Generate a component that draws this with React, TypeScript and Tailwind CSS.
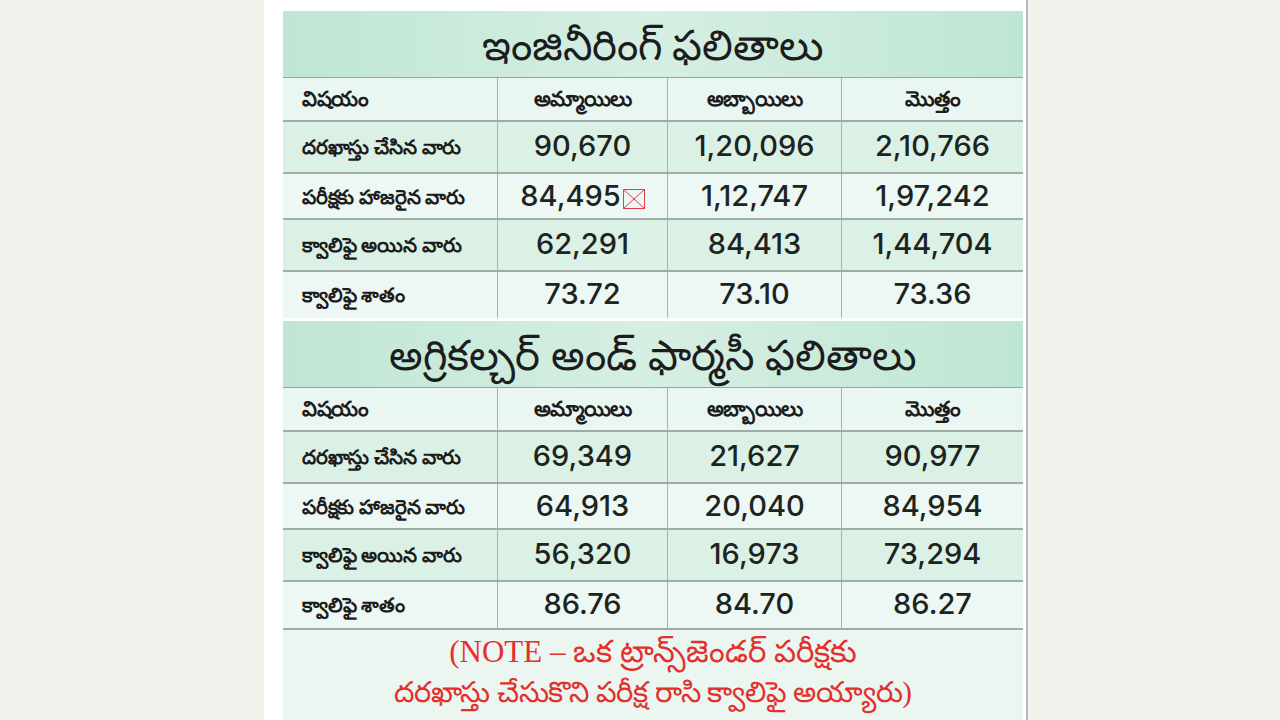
import React from 'react'

type Row = { label: string; values: string[]; mark?: boolean }

const headers = ['విషయం', 'అమ్మాయిలు', 'అబ్బాయిలు', 'మొత్తం']

const engineering: Row[] = [
	{ label: 'దరఖాస్తు చేసిన వారు', values: ['90,670', '1,20,096', '2,10,766'] },
	{ label: 'పరీక్షకు హాజరైన వారు', values: ['84,495', '1,12,747', '1,97,242'], mark: true },
	{ label: 'క్వాలిఫై అయిన వారు', values: ['62,291', '84,413', '1,44,704'] },
	{ label: 'క్వాలిఫై శాతం', values: ['73.72', '73.10', '73.36'] },
]

const agriculture: Row[] = [
	{ label: 'దరఖాస్తు చేసిన వారు', values: ['69,349', '21,627', '90,977'] },
	{ label: 'పరీక్షకు హాజరైన వారు', values: ['64,913', '20,040', '84,954'] },
	{ label: 'క్వాలిఫై అయిన వారు', values: ['56,320', '16,973', '73,294'] },
	{ label: 'క్వాలిఫై శాతం', values: ['86.76', '84.70', '86.27'] },
]

const rowHeights = ['h-[52px]', 'h-[46px]', 'h-[52px]', 'h-[48px]']
const rowBgs = ['bg-[#dcf1e6]', 'bg-[#edf7f3]', 'bg-[#dcf1e6]', 'bg-[#edf7f3]']

function BrokenImage() {
	return (
		<svg width="22" height="20" viewBox="0 0 22 20" className="ml-[2px] mt-[6px]">
			<rect x="0.5" y="0.5" width="21" height="19" fill="none" stroke="#e0404a" strokeWidth="1" />
			<path d="M1 1 L21 19 M21 1 L1 19" stroke="#e0404a" strokeWidth="1" />
		</svg>
	)
}

function Section({ title, rows }: { title: string; rows: Row[] }) {
	return (
		<div>
			<div className="flex h-[66px] items-center justify-center bg-gradient-to-r from-[#bfe6d3] via-[#d6efe3] to-[#bfe6d3] text-[42px] leading-none text-[#1c1c1c]">
				{title}
			</div>
			<div className="grid h-[43px] grid-cols-[214px_170px_174px_182px] border-t border-[#9aa39e] bg-[#eaf6f1] text-[21px] font-bold tracking-[-0.5px] text-[#1c1c1c]">
				{headers.map((h, i) => (
					<div
						key={h}
						className={`flex items-center ${i === 0 ? 'pl-[19px]' : 'justify-center border-l border-[#a9b2ad]'}`}
					>
						{h}
					</div>
				))}
			</div>
			{rows.map((row, r) => (
				<div
					key={row.label}
					className={`grid grid-cols-[214px_170px_174px_182px] border-t-2 border-[#a2aca6] ${rowHeights[r]} ${rowBgs[r]}`}
				>
					<div className="flex items-center whitespace-nowrap pl-[19px] text-[20px] font-bold tracking-[-0.2px] text-[#1c1c1c]">
						{row.label}
					</div>
					{row.values.map((v, i) => (
						<div
							key={i}
							className="flex items-center justify-center border-l border-[#a9b2ad] pb-[2px] font-['Inter',sans-serif] text-[29px] font-medium text-[#1d2420]"
						>
							{v}
							{row.mark && i === 0 && <BrokenImage />}
						</div>
					))}
				</div>
			))}
		</div>
	)
}

export default function App() {
	return (
		<div className="flex h-[720px] w-[1280px] overflow-hidden bg-[#f2f2ed] font-['Noto_Sans',sans-serif]">
			<div className="ml-[264px] w-[764px] border-r-2 border-[#b9b6c4] bg-white pl-[19px] pr-[3px] pt-[11px]">
				<div className="w-[740px]">
					<Section title="ఇంజినీరింగ్ ఫలితాలు" rows={engineering} />
					<div className="h-[3px] bg-white" />
					<Section title="అగ్రికల్చర్ అండ్ ఫార్మసీ ఫలితాలు" rows={agriculture} />
					<div className="flex h-[100px] flex-col items-center border-t-2 border-[#a2aca6] bg-[#ecf6f1] pt-[2px] font-['Liberation_Serif',serif] leading-[40px] text-[#e3302c]">
						<div className="text-[31px]">(NOTE – ఒక ట్రాన్స్‌జెండర్ పరీక్షకు</div>
						<div className="text-[29px] tracking-[-0.3px]">దరఖాస్తు చేసుకొని పరీక్ష రాసి క్వాలిఫై అయ్యారు)</div>
					</div>
				</div>
			</div>
		</div>
	)
}
